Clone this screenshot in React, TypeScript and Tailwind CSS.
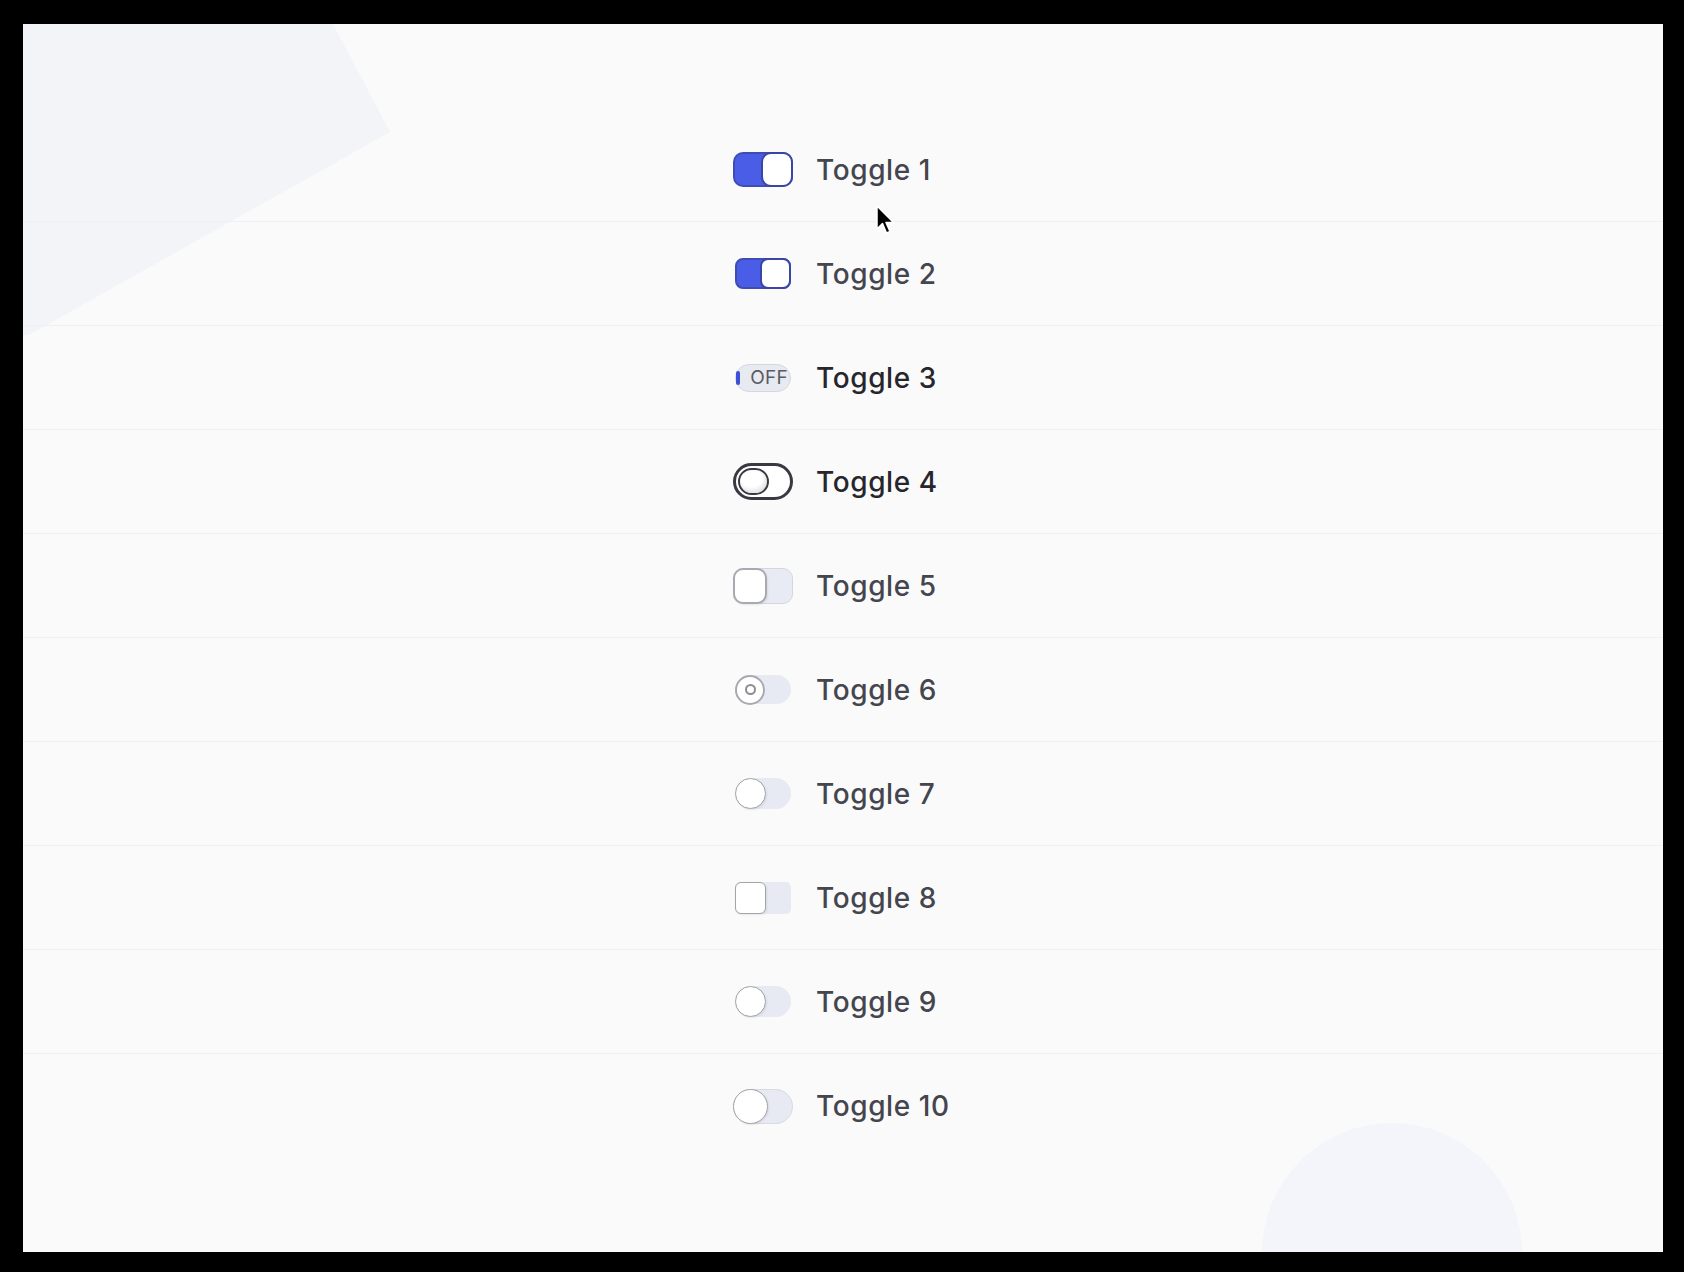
import React from "react";

function Knob({ className }: { className: string }) {
  return <div className={className} />;
}

function T1() {
  return (
    <div className="flex h-[35px] w-[60px] justify-end rounded-[10px] border-2 border-[#3f4cb4] bg-[#4a5de6]">
      <div className="-mr-[2px] -my-[2px] h-[35px] w-[32px] rounded-[10px] border-2 border-[#3a46a6] bg-white" />
    </div>
  );
}

function T2() {
  return (
    <div className="flex h-[31px] w-[56px] justify-end rounded-[8px] border-2 border-[#3f4cb4] bg-[#4a5de6]">
      <div className="-mr-[2px] -my-[2px] h-[31px] w-[31px] rounded-[8px] border-2 border-[#3a46a6] bg-white" />
    </div>
  );
}

function T3() {
  return (
    <div className="relative flex h-[28px] w-[56px] items-center justify-end rounded-full border border-[#d6d8e0] bg-[#e8eaf2] pr-[2px]">
      <div className="absolute left-[0px] top-[6px] h-[14px] w-[4px] rounded-full bg-[#3d50d8]" />
      <span className="text-[19px] leading-none tracking-[0.3px] text-[#5a5b63]">OFF</span>
    </div>
  );
}

function T4() {
  return (
    <div className="flex h-[37px] w-[62px] items-center rounded-full border-[3px] border-[#393942] bg-white pl-[2px]">
      <div className="h-[27px] w-[31px] rounded-full border-[2.5px] border-[#393942] bg-white shadow-[inset_-2px_-3px_4px_rgba(0,0,0,0.12)]" />
    </div>
  );
}

function T5() {
  return (
    <div className="flex h-[36px] w-[60px] items-center rounded-[10px] border border-[#d5d7df] bg-[#e9ebf4]">
      <div className="-ml-px h-[36px] w-[34px] rounded-[10px] border-2 border-[#a9a9b1] bg-white shadow-[1px_1px_2px_rgba(0,0,0,0.08)]" />
    </div>
  );
}

function T6() {
  return (
    <div className="flex h-[29px] w-[56px] items-center rounded-full bg-[#e7e9f3]">
      <div className="flex h-[30px] w-[30px] items-center justify-center rounded-full border-2 border-[#a9a9b0] bg-white">
        <div className="h-[11px] w-[11px] rounded-full border-2 border-[#8c8c94]" />
      </div>
    </div>
  );
}

function TCircle({ big }: { big?: boolean }) {
  return big ? (
    <div className="flex h-[35px] w-[60px] items-center rounded-full border border-[#d8dae2] bg-[#e8eaf3]">
      <Knob className="-ml-px h-[35px] w-[35px] rounded-full border-[1.5px] border-[#a3a3aa] bg-white shadow-[1px_1px_2px_rgba(0,0,0,0.08)]" />
    </div>
  ) : (
    <div className="flex h-[31px] w-[56px] items-center rounded-full bg-[#e8eaf3]">
      <Knob className="h-[31px] w-[31px] rounded-full border-[1.5px] border-[#a3a3aa] bg-white shadow-[1px_1px_2px_rgba(0,0,0,0.08)]" />
    </div>
  );
}

function T8() {
  return (
    <div className="flex h-[32px] w-[56px] items-center rounded-[5px] bg-[#e8eaf3]">
      <div className="h-[32px] w-[31px] rounded-[6px] border-[1.5px] border-[#a3a3aa] bg-white shadow-[1px_1px_2px_rgba(0,0,0,0.08)]" />
    </div>
  );
}

const rows: { label: string; el: React.ReactNode; dark?: boolean }[] = [
  { label: "Toggle 1", el: <T1 /> },
  { label: "Toggle 2", el: <T2 /> },
  { label: "Toggle 3", el: <T3 />, dark: true },
  { label: "Toggle 4", el: <T4 />, dark: true },
  { label: "Toggle 5", el: <T5 /> },
  { label: "Toggle 6", el: <T6 /> },
  { label: "Toggle 7", el: <TCircle /> },
  { label: "Toggle 8", el: <T8 /> },
  { label: "Toggle 9", el: <TCircle /> },
  { label: "Toggle 10", el: <TCircle big /> },
];

export default function App() {
  return (
    <div className="h-screen w-full bg-black pb-[20px] pl-[23px] pr-[21px] pt-[24px]">
      <div className="relative h-full w-full overflow-hidden bg-[#fafafb] font-['Inter',sans-serif]">
        <div className="absolute left-0 top-0 h-[320px] w-[380px] bg-[#f3f4f8] [clip-path:polygon(0_0,310px_0,367px_108px,6px_311px,0_311px)]" />
        <div className="absolute left-[1239px] top-[1099px] h-[260px] w-[260px] rounded-full bg-[#f3f5fa]" />

        <div className="relative flex flex-col pt-[94px]">
          {rows.map((r, i) => (
            <div
              key={r.label}
              className={
                i < rows.length - 1
                  ? "flex h-[104px] items-center border-b border-[#eef0f3]"
                  : "flex h-[104px] items-center"
              }
            >
              <div className="mx-auto flex w-[220px] items-center gap-[23px]">
                <div className="flex w-[60px] justify-center">{r.el}</div>
                <span
                  className={
                    r.dark
                      ? "whitespace-nowrap text-[28px] font-medium leading-none tracking-[0.6px] text-[#26262c]"
                      : "whitespace-nowrap text-[28px] font-medium leading-none tracking-[0.6px] text-[#44454d]"
                  }
                >
                  {r.label}
                </span>
              </div>
            </div>
          ))}
        </div>

        <svg
          className="absolute left-[852px] top-[180px]"
          width="22"
          height="32"
          viewBox="0 0 22 32"
        >
          <path
            d="M2 2 L2 25 L7.5 19.5 L11.5 29 L15 27.5 L11 18.5 L18.5 18.5 Z"
            fill="#000"
            stroke="#fff"
            strokeWidth="1.5"
            strokeLinejoin="round"
          />
        </svg>
      </div>
    </div>
  );
}
